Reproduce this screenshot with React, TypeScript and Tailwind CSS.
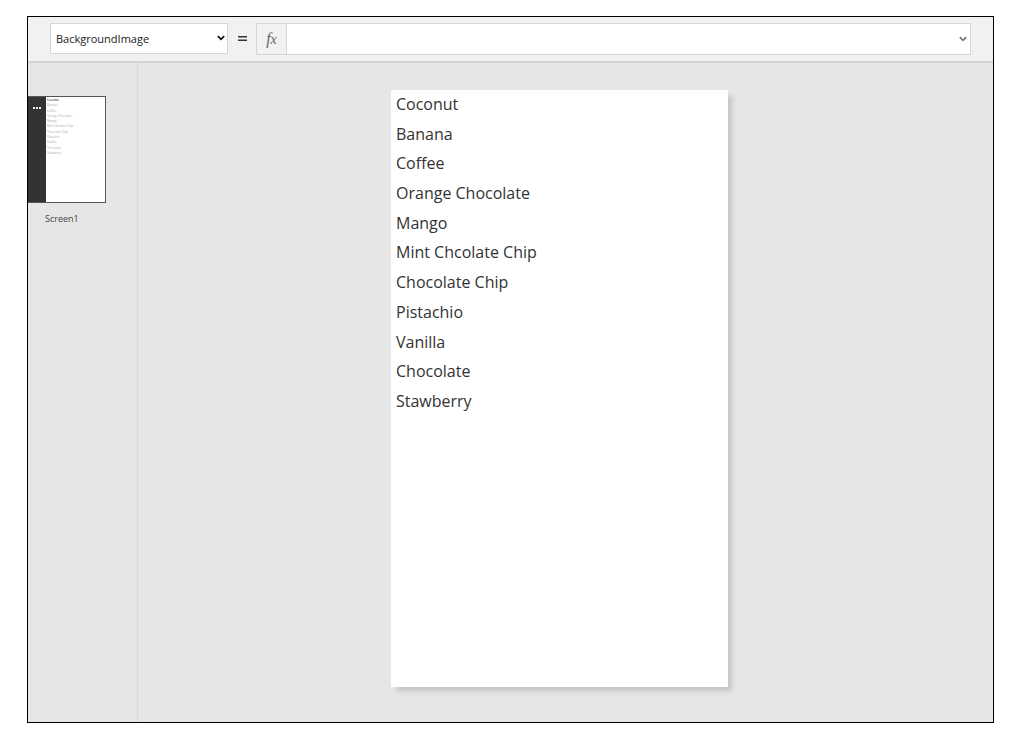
import { useState } from "react";

const flavors = [
  "Coconut",
  "Banana",
  "Coffee",
  "Orange Chocolate",
  "Mango",
  "Mint Chcolate Chip",
  "Chocolate Chip",
  "Pistachio",
  "Vanilla",
  "Chocolate",
  "Stawberry",
];

const properties = ["BackgroundImage", "Fill", "Height", "ImagePosition", "OnVisible", "Width"];

function Chevron({ className }: { className: string }) {
  return (
    <svg viewBox="0 0 8 6" className={className} fill="none" stroke="currentColor" aria-hidden="true">
      <path d="M0.8 1.2 4 4.4 7.2 1.2" />
    </svg>
  );
}

function FormulaBar() {
  const [property, setProperty] = useState("BackgroundImage");
  const [formula, setFormula] = useState("");

  return (
    <header className="flex items-start border-b-2 border-[#d4d4d4] bg-[#f1f1f1] px-[22px] py-1.5">
      <div className="relative w-[178px] shrink-0">
        <select
          aria-label="Property"
          value={property}
          onChange={(e) => setProperty(e.target.value)}
          className="block h-[31px] w-full appearance-none border border-[#d6d6d6] bg-white pt-0.5 pl-[5px] text-[11px] text-[#222]"
        >
          {properties.map((p) => (
            <option key={p}>{p}</option>
          ))}
        </select>
        <Chevron className="pointer-events-none absolute top-3 right-[3px] h-[6px] w-2 stroke-[1.7] text-[#111]" />
      </div>
      <span className="flex h-[31px] w-7 shrink-0 items-center justify-center" aria-hidden="true">
        <svg viewBox="0 0 9 5" className="h-[5px] w-[9px]" fill="#333">
          <path d="M0 0h9v1.4H0zM0 3.6h9V5H0z" />
        </svg>
      </span>
      <div className="flex h-8 flex-1 border border-[#d6d6d6] bg-white">
        <label
          htmlFor="formula"
          className="flex w-[30px] items-center justify-center border-r border-[#d6d6d6] bg-[#f1f1f1] font-['Liberation_Serif',serif] text-base text-[#666] italic"
        >
          <span>
            f<span className="text-sm">x</span>
          </span>
        </label>
        <input
          id="formula"
          value={formula}
          onChange={(e) => setFormula(e.target.value)}
          className="min-w-0 flex-1 px-2 text-xs outline-none"
        />
        <button type="button" aria-label="Expand formula bar" className="flex w-[14px] items-center justify-center text-[#777]">
          <Chevron className="h-[6px] w-2 stroke-[1.7]" />
        </button>
      </div>
    </header>
  );
}

function ScreenList() {
  return (
    <aside className="w-[110px] shrink-0 border-r border-[#d8d8d8] pt-[33px]">
      <div className="flex h-[107px] w-[78px] border-y border-r border-[#555] bg-white">
        <button
          type="button"
          aria-label="Screen options"
          className="flex w-[18px] shrink-0 items-start justify-center bg-[#333] pt-[10px]"
        >
          <svg viewBox="0 0 8 2" className="h-[2px] w-2" fill="#eee" aria-hidden="true">
            <path d="M0 0h2v2H0zM3 0h2v2H3zM6 0h2v2H6z" />
          </svg>
        </button>
        <ul className="mt-px grid h-[58px] flex-1 auto-rows-fr pl-px text-[3px] leading-none text-[#aaa]">
          {flavors.map((name) => (
            <li key={name} className="flex items-center first:text-black">
              {name}
            </li>
          ))}
        </ul>
      </div>
      <p className="mt-2 ml-[17px] text-[9px] leading-4 text-[#444]">Screen1</p>
    </aside>
  );
}

export default function App() {
  return (
    <div className="flex min-h-screen bg-white px-[27px] pt-4 pb-[14px] font-['Open_Sans','Noto_Sans',sans-serif]">
      <div className="flex flex-1 flex-col border border-black bg-[#e6e6e6]">
        <FormulaBar />
        <div className="flex flex-1">
          <ScreenList />
          <main className="flex flex-1 justify-center pt-[27px] pr-3 pb-[35px]">
            <section className="w-[337px] bg-white shadow-[5px_5px_5px_-1px_rgba(0,0,0,0.15)]">
              <ul className="grid h-[327px] auto-rows-fr pl-[5px] text-base text-[#333]">
                {flavors.map((name) => (
                  <li key={name} className="flex items-center pb-0.5">
                    {name}
                  </li>
                ))}
              </ul>
            </section>
          </main>
        </div>
      </div>
    </div>
  );
}
